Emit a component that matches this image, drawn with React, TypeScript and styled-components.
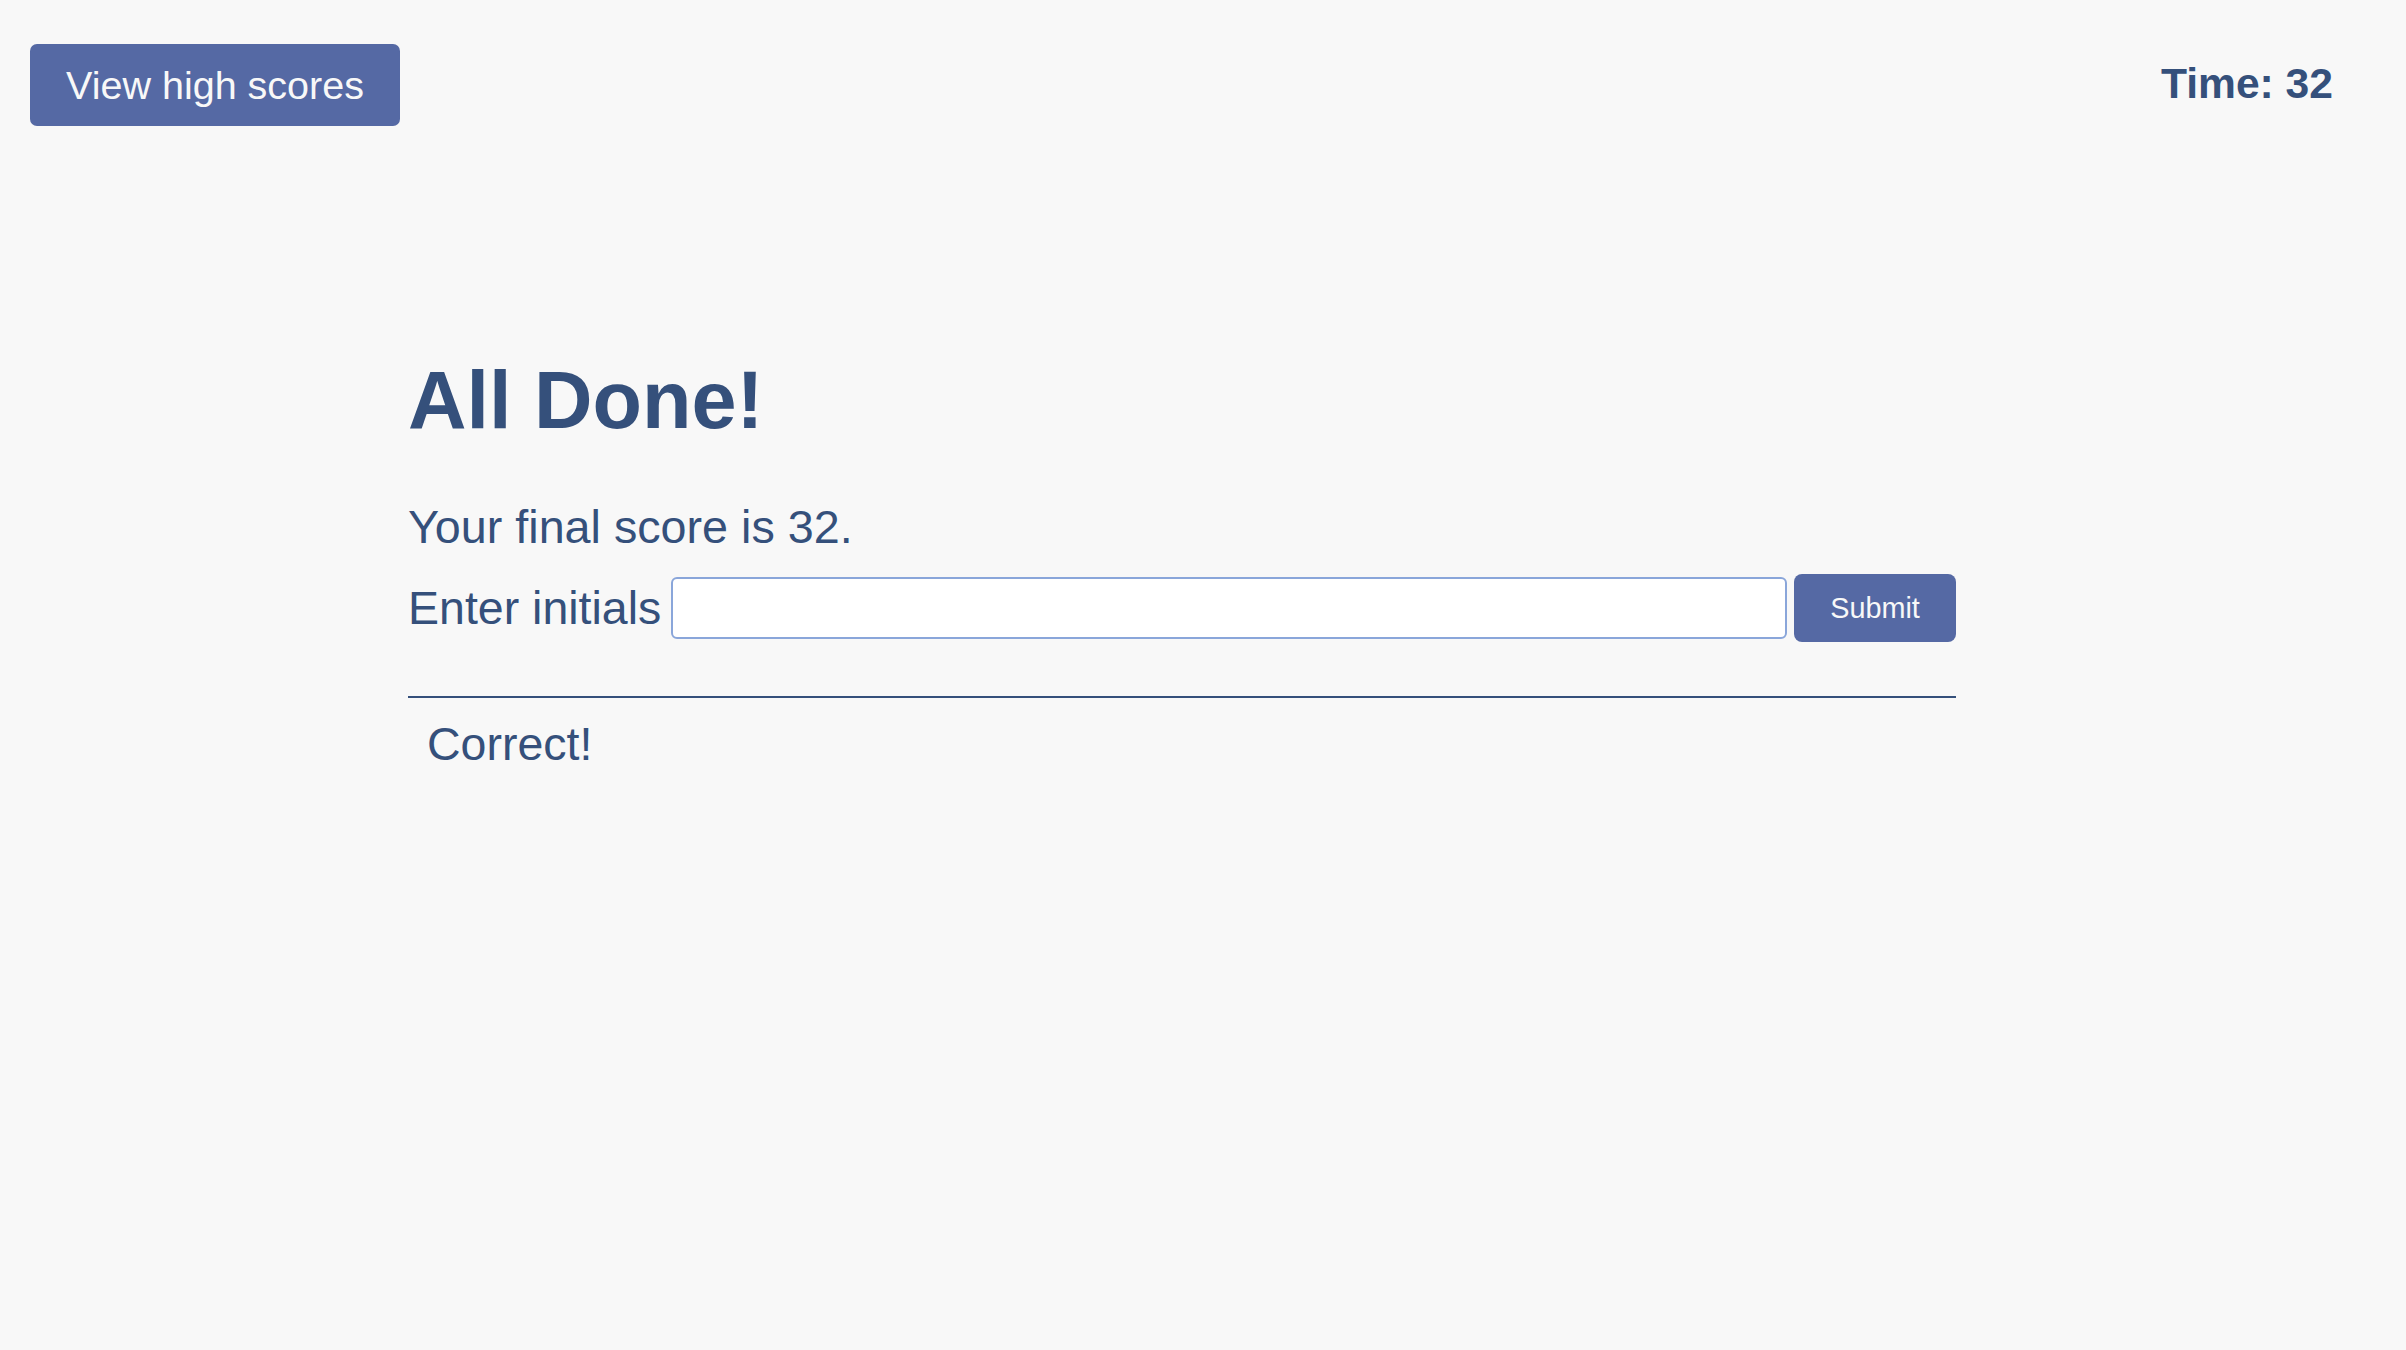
import React from "react";
import styled, { createGlobalStyle } from "styled-components";

const GlobalStyle = createGlobalStyle`
  html, body {
    margin: 0;
    padding: 0;
    background: #f8f8f8;
    font-family: "Liberation Sans", Arial, sans-serif;
    color: #35507b;
  }
  #root {
    min-height: 100vh;
  }
`;

const Page = styled.div`
  min-height: 100vh;
  background: #f8f8f8;
`;

const Header = styled.header`
  display: flex;
  justify-content: space-between;
  align-items: flex-start;
  padding: 44px 73px 0 30px;
`;

const Button = styled.button<{ $size: "lg" | "sm" }>`
  display: inline-flex;
  align-items: center;
  justify-content: center;
  box-sizing: border-box;
  border: none;
  background: #5569a4;
  color: #f8f8f8;
  font-family: "Liberation Sans", Arial, sans-serif;
  cursor: pointer;
  height: ${(p) => (p.$size === "lg" ? "82px" : "68px")};
  width: ${(p) => (p.$size === "lg" ? "370px" : "162px")};
  font-size: ${(p) => (p.$size === "lg" ? "39.5px" : "28.8px")};
  border-radius: ${(p) => (p.$size === "lg" ? "7px" : "8px")};
  padding: 0;
  flex-shrink: 0;
`;

const Timer = styled.div`
  margin-top: 15px;
  font-size: 42.6px;
  line-height: 48px;
  font-weight: bold;
  color: #35507b;
`;

const Main = styled.main`
  margin: 228px 0 0 408px;
  width: 1548px;
`;

const Title = styled.h1`
  margin: 0;
  font-size: 81px;
  line-height: 92px;
  font-weight: bold;
`;

const Score = styled.p`
  margin: 53px 0 0;
  font-size: 46.7px;
  line-height: 56px;
`;

const Row = styled.form`
  display: flex;
  align-items: center;
  margin-top: 19px;
`;

const Label = styled.label`
  font-size: 46.5px;
  line-height: 56px;
  white-space: nowrap;
`;

const Input = styled.input`
  flex: 1;
  box-sizing: border-box;
  height: 62px;
  margin: 0 7px 0 10px;
  border: 2px solid #8aa6da;
  border-radius: 6px;
  background: #ffffff;
  font-size: 28px;
  font-family: "Liberation Sans", Arial, sans-serif;
  outline: none;
`;

const Divider = styled.hr`
  margin: 54px 0 0;
  border: none;
  height: 2px;
  background: #35507b;
`;

const Feedback = styled.p`
  margin: 18px 0 0;
  padding-left: 19px;
  font-size: 46.5px;
  line-height: 56px;
`;

export default function App() {
  return (
    <Page>
      <GlobalStyle />
      <Header>
        <Button $size="lg" type="button">View high scores</Button>
        <Timer>Time: 32</Timer>
      </Header>
      <Main>
        <Title>All Done!</Title>
        <Score>Your final score is 32.</Score>
        <Row onSubmit={(e) => e.preventDefault()}>
          <Label htmlFor="initials">Enter initials</Label>
          <Input id="initials" type="text" />
          <Button $size="sm" type="submit">Submit</Button>
        </Row>
        <Divider />
        <Feedback>Correct!</Feedback>
      </Main>
    </Page>
  );
}
